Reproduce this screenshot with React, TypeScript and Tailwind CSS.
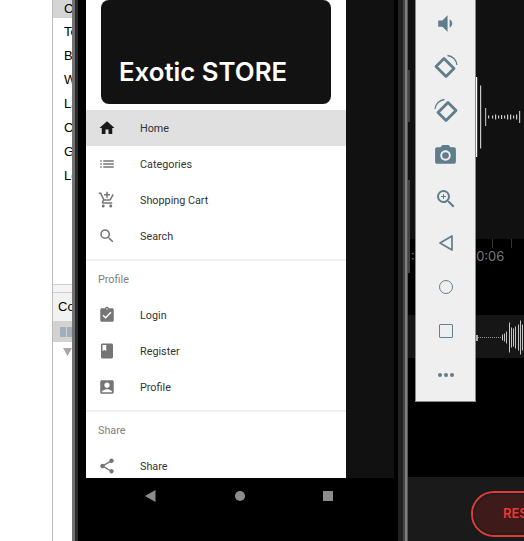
import type { ReactNode } from "react";
import {
  MdAccountBox,
  MdAddShoppingCart,
  MdAssignmentTurnedIn,
  MdBook,
  MdHome,
  MdList,
  MdPhotoCamera,
  MdSearch,
  MdShare,
  MdVolumeDown,
  MdZoomIn,
} from "react-icons/md";

const paletteItems = ["Common", "Text", "Buttons", "Widgets", "Layouts", "Containers", "Google", "Legacy"];

function StudioPanel() {
  return (
    <div className="flex h-full w-[72px] shrink-0 flex-col overflow-hidden bg-white pl-[52px] font-['Liberation_Sans',sans-serif] text-[13px] text-black">
      <div className="flex h-full w-[20px] flex-col border-l border-[#bdbdbd]">
        <div className="h-[284px] overflow-hidden">
          {paletteItems.map((item, i) => (
            <div
              key={item}
              className={`flex items-center whitespace-nowrap pl-[11px] ${i === 0 ? "mb-[2px] h-[18px] bg-[#d5d5d5]" : "h-[24px]"}`}
            >
              {item}
            </div>
          ))}
        </div>
        <div className="h-[9px] border-y border-[#cfcfcf] bg-[#f4f4f4]" />
        <div className="flex h-[28px] items-center whitespace-nowrap bg-[#f2f2f2] pl-[5px]">Component Tree</div>
        <div className="flex h-[21px] items-center gap-[1px] bg-[#d2d2d2] pl-[7px]">
          <div className="h-[10px] w-[6px] shrink-0 bg-[#9fb0bd]" />
          <div className="h-[10px] w-[6px] shrink-0 bg-[#9fb0bd]" />
        </div>
        <svg width="12" height="10" viewBox="0 0 12 10" className="ml-[9px] mt-[5px]">
          <path d="M1 1h9l-4.500 8z" fill="#a8a8a8" />
        </svg>
      </div>
    </div>
  );
}

type DrawerRow = { label: string; icon: ReactNode; active?: boolean };

function Row({ label, icon, active }: DrawerRow) {
  return (
    <div className={`flex h-[36px] items-center ${active ? "bg-[#e0e0e0]" : ""}`}>
      <div className={`flex w-[54px] justify-center pr-[12px] text-[18px] ${active ? "text-[#1a1a1a]" : "text-[#757575]"}`}>
        {icon}
      </div>
      <span className="mt-[2px] text-[10.800px] text-[#333333]">{label}</span>
    </div>
  );
}

function SectionLabel({ children }: { children: ReactNode }) {
  return <div className="flex h-[36px] items-center pl-[12px] pt-[2px] text-[10.800px] text-[#808080]">{children}</div>;
}

function Drawer() {
  return (
    <div className="h-full w-[260px] shrink-0 overflow-hidden bg-white font-['Roboto',sans-serif]">
      <div className="px-[15px] pb-[6px]">
        <div className="flex h-[104px] items-end rounded-lg bg-[#121212] pb-[15px] pl-[18px] font-['Inter',sans-serif] text-[25.800px] font-semibold leading-[34px] text-white">
          Exotic STORE
        </div>
      </div>
      <Row label="Home" icon={<MdHome />} active />
      <Row label="Categories" icon={<MdList />} />
      <Row label="Shopping Cart" icon={<MdAddShoppingCart />} />
      <Row label="Search" icon={<MdSearch />} />
      <div className="mt-[5px] h-[2px] bg-[#f0f0f0]" />
      <SectionLabel>Profile</SectionLabel>
      <Row label="Login" icon={<MdAssignmentTurnedIn />} />
      <Row label="Register" icon={<MdBook />} />
      <Row label="Profile" icon={<MdAccountBox />} />
      <div className="mt-[5px] h-[2px] bg-[#f0f0f0]" />
      <SectionLabel>Share</SectionLabel>
      <Row label="Share" icon={<MdShare />} />
    </div>
  );
}

function PhoneNavBar() {
  return (
    <div className="flex h-[63px] items-start bg-black pt-[11px] pl-[66px]">
      <svg width="12" height="14" viewBox="0 0 12 14">
        <path d="M11.500 1v12L1 7z" fill="#8c8c8c" />
      </svg>
      <div className="ml-[79px] mt-[2px] h-[10px] w-[10px] rounded-full bg-[#8c8c8c]" />
      <div className="ml-[78px] mt-[2px] h-[10px] w-[10px] bg-[#8c8c8c]" />
    </div>
  );
}

function RotateIcon({ flip }: { flip?: boolean }) {
  return (
    <svg width="26" height="26" viewBox="0 0 26 26" fill="none" stroke="#607d8b" style={flip ? { transform: "scaleX(-1)" } : undefined}>
      <path d="M3 12.500 11 4.500 21 14.500 13 22.500z" strokeWidth="2.800" strokeLinejoin="round" />
      <path d="M14.500 1.500C19.500 2 23.500 6 24 11" strokeWidth="1.300" />
    </svg>
  );
}

const toolbarIcons: ReactNode[] = [
  <MdVolumeDown key="volume" className="text-[25px]" />,
  <RotateIcon key="rotate-left" />,
  <RotateIcon key="rotate-right" flip />,
  <MdPhotoCamera key="camera" className="text-[25px]" />,
  <MdZoomIn key="zoom" className="text-[24px]" />,
  <svg key="back" width="18" height="18" viewBox="0 0 18 18" fill="none" stroke="#607d8b" strokeWidth="1.700">
    <path d="M15 2v14L3 9z" strokeLinejoin="round" />
  </svg>,
  <div key="home" className="h-[14px] w-[14px] rounded-full border-[1.500px] border-[#5f8296]" />,
  <div key="square" className="h-[14px] w-[14px] rounded-[1px] border-[1.500px] border-[#5f8296]" />,
  <div key="more" className="flex gap-[2px]">
    <div className="h-[4px] w-[4px] rounded-full bg-[#607d8b]" />
    <div className="h-[4px] w-[4px] rounded-full bg-[#607d8b]" />
    <div className="h-[4px] w-[4px] rounded-full bg-[#607d8b]" />
  </div>,
];

function EmulatorToolbar() {
  return (
    <div className="absolute left-[7px] top-0 flex h-[402px] w-[61px] flex-col border-x border-b border-[#8a8a8a] bg-[#efefef] pt-px text-[#607d8b]">
      {toolbarIcons.map((icon, i) => (
        <div key={i} className="flex h-[44px] shrink-0 items-center justify-center">
          {icon}
        </div>
      ))}
    </div>
  );
}

const topWave = [
  [68, 80, "#ffffff"],
  [72, 63, "#c8c8c8"],
  [77, 18, "#b0b0b0"],
  [80, 3, "#cccccc"],
  [84, 3, "#cccccc"],
  [87, 5, "#cccccc"],
  [90, 3, "#cccccc"],
  [93, 4, "#cccccc"],
  [96, 3, "#cccccc"],
  [99, 5, "#cccccc"],
  [102, 5, "#cccccc"],
  [105, 3, "#cccccc"],
  [108, 5, "#cccccc"],
  [111, 12, "#bbbbbb"],
] as const;

const stripWave = [
  [94, 6], [96, 8], [98, 12], [101, 30], [103, 20], [105, 18], [107, 22], [110, 26], [112, 34], [114, 26],
] as const;

function AudioPanel() {
  return (
    <div className="relative flex h-full min-w-0 flex-1 flex-col overflow-hidden bg-black font-['Inter',sans-serif]">
      <div className="h-[239px] shrink-0 bg-[#111111]">
        <svg width="116" height="239">
          {topWave.map(([x, h, color]) => (
            <rect key={x} x={x} y={117 - h / 2} width="1.200" height={h} fill={color} />
          ))}
        </svg>
      </div>
      <div className="relative h-[76px] shrink-0">
        <div className="absolute left-[84px] top-0 h-[9px] w-px bg-[#333333]" />
        <div className="absolute left-[103px] top-0 h-[9px] w-px bg-[#333333]" />
        <div className="flex pt-[9px] text-[13px] leading-[16px] text-[#787878]">
          <span className="ml-[3px]">:0</span>
          <span className="ml-[45px]">00:06</span>
        </div>
      </div>
      <div className="h-[43px] shrink-0 bg-[#161616]">
        <svg width="116" height="43">
          <rect x="68" y="20" width="2" height="6" fill="#aaaaaa" />
          <line x1="70" y1="22.500" x2="94" y2="22.500" stroke="#999999" strokeDasharray="1 1" />
          {stripWave.map(([x, h]) => (
            <rect key={x} x={x} y={22.500 - h / 2} width="1" height={h} fill="#c4c4c4" />
          ))}
        </svg>
      </div>
      <div className="flex-1" />
      <div className="h-[64px] shrink-0 bg-[#1a1a1a] pl-[63px] pt-[14px]">
        <div className="flex h-[46px] w-[120px] items-center rounded-full border-2 border-[#e53935] bg-[#3e1a1a] pl-[30px] text-[13px] font-semibold text-[#e53935] outline-2 -outline-offset-4 outline-[#1f1f1f]">
          RESET
        </div>
      </div>
      {/* phone side buttons */}
      <div className="absolute left-0 top-[70px] h-[52px] w-[2px] bg-[#444444]" />
      <div className="absolute left-0 top-[180px] h-[93px] w-[2px] bg-[#444444]" />
      <EmulatorToolbar />
    </div>
  );
}

export default function App() {
  return (
    <div className="flex h-[541px] w-[524px] overflow-hidden bg-black">
      <StudioPanel />
      <div className="w-[3px] shrink-0 bg-[#707070]" />
      <div className="w-[3px] shrink-0 bg-[#2c2c2c]" />
      <div className="flex h-full w-[316px] shrink-0 flex-col">
        <div className="flex h-[478px] pl-[8px]">
          <Drawer />
          <div className="flex-1 bg-[#111111]" />
        </div>
        <PhoneNavBar />
      </div>
      <div className="w-[4px] shrink-0 bg-black" />
      <div className="w-[5px] shrink-0 bg-[#222222]" />
      <div className="w-[2px] shrink-0 bg-[#444444]" />
      <div className="w-[2px] shrink-0 bg-[#808080]" />
      <div className="w-px shrink-0 bg-[#555555]" />
      <AudioPanel />
    </div>
  );
}
